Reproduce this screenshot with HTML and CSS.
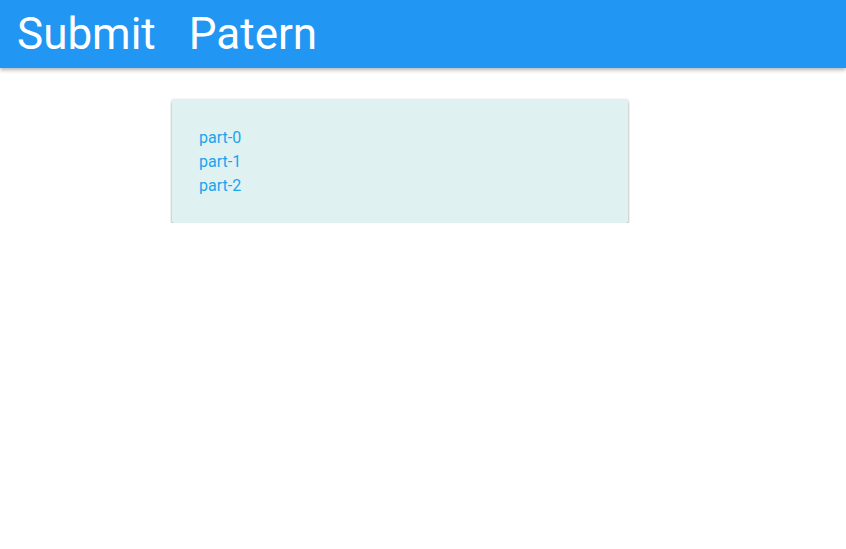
FILE: index.html
```html
<!DOCTYPE html>
<html>
<head>
<meta charset="utf-8">
<link rel="stylesheet" href="styles.css">
</head>
<body>
<header class="topbar">
  <span class="title">Submit</span>
  <span class="title">Patern</span>
</header>
<main class="content">
  <div class="card">
    <div class="part">part-0</div>
    <div class="part">part-1</div>
    <div class="part">part-2</div>
  </div>
</main>
</body>
</html>
```
FILE: styles.css
```css
html, body {
  margin: 0;
  padding: 0;
  background: #ffffff;
  font-family: Roboto, "Liberation Sans", sans-serif;
}
.topbar {
  height: 68px;
  background: #2196f3;
  box-shadow: 0 2px 4px rgba(0,0,0,0.3);
  display: flex;
  align-items: center;
  gap: 33px;
  padding-left: 17px;
  box-sizing: border-box;
}
.title {
  color: #ffffff;
  font-size: 44px;
  line-height: 68px;
  font-weight: 400;
}
.content {
  padding-top: 31px;
  padding-left: 172px;
}
.card {
  width: 456px;
  box-sizing: border-box;
  background: #e0f1f1;
  border-radius: 2px;
  box-shadow: 0 2px 3px rgba(0,0,0,0.4), 0 0 2px rgba(0,0,0,0.1);
  padding: 27px 27px 25px;
}
.part {
  color: #1ba4ee;
  font-size: 16px;
  line-height: 24px;
}
```
